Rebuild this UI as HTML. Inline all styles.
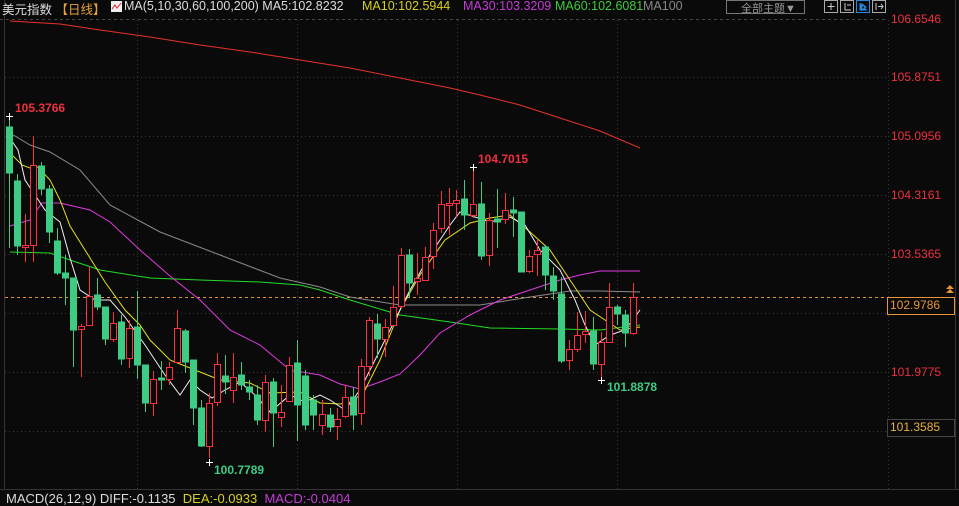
<!DOCTYPE html>
<html><head><meta charset="utf-8"><style>
html,body{margin:0;padding:0;background:#0a0a0a;width:959px;height:504px;overflow:hidden;font-family:"Liberation Sans","Noto Sans CJK SC",sans-serif}
.t{position:absolute;font-size:12px;white-space:nowrap}
.h{font-size:12.5px;top:-1px}
</style></head><body>
<svg width="959" height="504" style="position:absolute;left:0;top:0" xmlns="http://www.w3.org/2000/svg">
<rect width="959" height="504" fill="#0a0a0a"/>
<line x1="0" y1="19.5" x2="886" y2="19.5" stroke="#444" stroke-dasharray="3,3"/>
<g stroke="#3a3a3a" stroke-dasharray="1,3">
<line x1="5" y1="77.5" x2="886" y2="77.5"/><line x1="5" y1="136.5" x2="886" y2="136.5"/><line x1="5" y1="195.5" x2="886" y2="195.5"/><line x1="5" y1="254.5" x2="886" y2="254.5"/><line x1="5" y1="313.5" x2="886" y2="313.5"/><line x1="5" y1="372.5" x2="886" y2="372.5"/><line x1="5" y1="431.5" x2="886" y2="431.5"/>
<line x1="137.5" y1="20" x2="137.5" y2="490"/><line x1="297.5" y1="20" x2="297.5" y2="490"/><line x1="457.5" y1="20" x2="457.5" y2="490"/><line x1="617.5" y1="20" x2="617.5" y2="490"/>
<line x1="888.5" y1="20" x2="888.5" y2="490"/>
</g>
<line x1="4.5" y1="0" x2="4.5" y2="490" stroke="#333"/>
<line x1="0" y1="489.5" x2="959" y2="489.5" stroke="#333"/>
<line x1="955.5" y1="0" x2="955.5" y2="490" stroke="#333"/>
<line x1="5" y1="297.5" x2="886" y2="297.5" stroke="#e8963c" stroke-dasharray="3,3"/>
<g fill="none" stroke-width="1">
<polyline stroke="#e8322c" points="10,21 60,24 100,30 150,37 200,45 250,52 300,60 350,68 400,78 450,88 480,95 520,105 560,118 600,131 640,148"/>
<polyline stroke="#8a8a8a" points="10,133 30,145 50,152 80,170 110,205 160,232 220,255 280,278 320,287 350,297 400,305 480,305 530,297 570,291 600,291 640,292"/>
<polyline stroke="#22dd22" points="10,252 50,253 70,260 100,270 150,278 200,280 260,282 300,285 320,290 350,300 400,315 450,322 490,328 560,329 600,330 640,325"/>
<polyline stroke="#e03ce0" points="10,226 30,220 42,203 60,203 90,210 110,222 140,250 170,276 200,300 230,330 260,345 290,370 320,375 340,384 360,389 380,382 400,374 420,355 440,333 470,315 500,300 530,290 560,280 580,275 600,271 640,271"/>
<polyline stroke="#e6e020" points="9,152 22,165 30,168 38,167 50,180 60,200 70,226 90,258 105,282 125,310 140,325 150,340 170,360 190,368 220,380 250,383 270,393 300,392 320,403 340,404 352,402 365,390 380,360 400,310 420,275 445,240 470,223 490,218 510,215 530,232 550,250 570,280 590,310 605,320 620,330 640,327"/>
<polyline stroke="#f0f0f0" points="9,137 18,150 25,180 35,195 45,210 60,222 70,258 80,290 95,300 110,300 125,317 145,345 165,375 180,395 190,380 200,390 212,398 225,390 240,382 255,395 270,412 290,395 305,402 320,395 330,400 345,410 360,390 375,360 395,320 410,290 430,255 450,225 460,212 475,217 490,222 510,217 525,225 540,250 560,270 575,300 585,325 595,345 610,335 625,330 640,310"/>
</g>
<g stroke-width="1">
<g stroke="#3ecb84" fill="#3ecb84">
<line x1="9.5" y1="116" x2="9.5" y2="248"/><rect x="6.5" y="127" width="6" height="46"/>
<line x1="17.5" y1="174" x2="17.5" y2="255"/><rect x="14.5" y="181" width="6" height="65"/>
<line x1="41.5" y1="162" x2="41.5" y2="195"/><rect x="38.5" y="166" width="6" height="23"/>
<line x1="49.5" y1="185" x2="49.5" y2="243"/><rect x="46.5" y="189" width="6" height="43"/>
<line x1="57.5" y1="228" x2="57.5" y2="275"/><rect x="54.5" y="241" width="6" height="32"/>
<line x1="65.5" y1="255" x2="65.5" y2="305"/><rect x="62.5" y="273" width="6" height="5"/>
<line x1="73.5" y1="278" x2="73.5" y2="367"/><rect x="70.5" y="278" width="6" height="52"/>
<line x1="97.5" y1="278" x2="97.5" y2="310"/><rect x="94.5" y="295" width="6" height="12"/>
<line x1="105.5" y1="307" x2="105.5" y2="345"/><rect x="102.5" y="307" width="6" height="32"/>
<line x1="121.5" y1="315" x2="121.5" y2="365"/><rect x="118.5" y="322" width="6" height="37"/>
<line x1="137.5" y1="291" x2="137.5" y2="379"/><rect x="134.5" y="327" width="6" height="38"/>
<line x1="145.5" y1="365" x2="145.5" y2="412"/><rect x="142.5" y="365" width="6" height="38"/>
<line x1="161.5" y1="361" x2="161.5" y2="390"/><rect x="158.5" y="378" width="6" height="2"/>
<line x1="185.5" y1="329" x2="185.5" y2="373"/><rect x="182.5" y="331" width="6" height="31"/>
<line x1="193.5" y1="360" x2="193.5" y2="425"/><rect x="190.5" y="360" width="6" height="48"/>
<line x1="201.5" y1="400" x2="201.5" y2="447"/><rect x="198.5" y="408" width="6" height="38"/>
<line x1="225.5" y1="355" x2="225.5" y2="394"/><rect x="222.5" y="376" width="6" height="6"/>
<line x1="241.5" y1="362" x2="241.5" y2="390"/><rect x="238.5" y="375" width="6" height="10"/>
<line x1="249.5" y1="380" x2="249.5" y2="400"/><rect x="246.5" y="387" width="6" height="5"/>
<line x1="257.5" y1="385" x2="257.5" y2="425"/><rect x="254.5" y="395" width="6" height="25"/>
<line x1="273.5" y1="378" x2="273.5" y2="447"/><rect x="270.5" y="382" width="6" height="31"/>
<line x1="297.5" y1="340" x2="297.5" y2="441"/><rect x="294.5" y="363" width="6" height="42"/>
<line x1="305.5" y1="370" x2="305.5" y2="430"/><rect x="302.5" y="376" width="6" height="49"/>
<line x1="313.5" y1="395" x2="313.5" y2="430"/><rect x="310.5" y="400" width="6" height="15"/>
<line x1="330.5" y1="408" x2="330.5" y2="432"/><rect x="327.5" y="415" width="6" height="12"/>
<line x1="353.5" y1="387" x2="353.5" y2="430"/><rect x="350.5" y="397" width="6" height="18"/>
<line x1="377.5" y1="314" x2="377.5" y2="358"/><rect x="374.5" y="324" width="6" height="15"/>
<line x1="409.5" y1="249" x2="409.5" y2="298"/><rect x="406.5" y="255" width="6" height="28"/>
<line x1="464.5" y1="180" x2="464.5" y2="230"/><rect x="461.5" y="199" width="6" height="16"/>
<line x1="481.5" y1="182" x2="481.5" y2="260"/><rect x="478.5" y="204" width="6" height="52"/>
<line x1="497.5" y1="189" x2="497.5" y2="248"/><rect x="494.5" y="219" width="6" height="3"/>
<line x1="513.5" y1="197" x2="513.5" y2="237"/><rect x="510.5" y="210" width="6" height="3"/>
<line x1="521.5" y1="212" x2="521.5" y2="272"/><rect x="518.5" y="212" width="6" height="60"/>
<line x1="545.5" y1="245" x2="545.5" y2="290"/><rect x="542.5" y="247" width="6" height="28"/>
<line x1="553.5" y1="267" x2="553.5" y2="300"/><rect x="550.5" y="276" width="6" height="15"/>
<line x1="561.5" y1="277" x2="561.5" y2="363"/><rect x="558.5" y="294" width="6" height="67"/>
<line x1="593.5" y1="317" x2="593.5" y2="370"/><rect x="590.5" y="331" width="6" height="33"/>
<line x1="617.5" y1="305" x2="617.5" y2="325"/><rect x="614.5" y="307" width="6" height="7"/>
<line x1="625.5" y1="310" x2="625.5" y2="347"/><rect x="622.5" y="315" width="6" height="18"/>
</g>
<g stroke="#ff3040" fill="#0a0a0a">
<line x1="25.5" y1="214" x2="25.5" y2="262"/><rect x="22.5" y="245.5" width="6" height="2"/>
<line x1="33.5" y1="136" x2="33.5" y2="262"/><rect x="30.5" y="165.5" width="6" height="80"/>
<line x1="81.5" y1="324" x2="81.5" y2="377"/><rect x="78.5" y="326.5" width="6" height="3"/>
<line x1="89.5" y1="267" x2="89.5" y2="325"/><rect x="86.5" y="296.5" width="6" height="29"/>
<line x1="113.5" y1="312" x2="113.5" y2="342"/><rect x="110.5" y="323.5" width="6" height="16"/>
<line x1="129.5" y1="320" x2="129.5" y2="368"/><rect x="126.5" y="328.5" width="6" height="30"/>
<line x1="153.5" y1="371" x2="153.5" y2="416"/><rect x="150.5" y="379.5" width="6" height="24"/>
<line x1="169.5" y1="362" x2="169.5" y2="385"/><rect x="166.5" y="367.5" width="6" height="12"/>
<line x1="177.5" y1="310" x2="177.5" y2="362"/><rect x="174.5" y="328.5" width="6" height="34"/>
<line x1="209.5" y1="393" x2="209.5" y2="458"/><rect x="206.5" y="403.5" width="6" height="43"/>
<line x1="217.5" y1="353" x2="217.5" y2="406"/><rect x="214.5" y="364.5" width="6" height="38"/>
<line x1="233.5" y1="353" x2="233.5" y2="403"/><rect x="230.5" y="377.5" width="6" height="13"/>
<line x1="265.5" y1="375" x2="265.5" y2="432"/><rect x="262.5" y="382.5" width="6" height="38"/>
<line x1="281.5" y1="385" x2="281.5" y2="427"/><rect x="278.5" y="412.5" width="6" height="5"/>
<line x1="289.5" y1="357" x2="289.5" y2="402"/><rect x="286.5" y="365.5" width="6" height="36"/>
<line x1="322.5" y1="400" x2="322.5" y2="435"/><rect x="319.5" y="414.5" width="6" height="11"/>
<line x1="337.5" y1="408" x2="337.5" y2="440"/><rect x="334.5" y="419.5" width="6" height="7"/>
<line x1="345.5" y1="385" x2="345.5" y2="418"/><rect x="342.5" y="397.5" width="6" height="19"/>
<line x1="361.5" y1="359" x2="361.5" y2="425"/><rect x="358.5" y="366.5" width="6" height="47"/>
<line x1="369.5" y1="317" x2="369.5" y2="376"/><rect x="366.5" y="320.5" width="6" height="46"/>
<line x1="385.5" y1="319" x2="385.5" y2="357"/><rect x="382.5" y="327.5" width="6" height="12"/>
<line x1="393.5" y1="286" x2="393.5" y2="325"/><rect x="390.5" y="307.5" width="6" height="18"/>
<line x1="401.5" y1="248" x2="401.5" y2="308"/><rect x="398.5" y="255.5" width="6" height="51"/>
<line x1="417.5" y1="253" x2="417.5" y2="295"/><rect x="414.5" y="278.5" width="6" height="3"/>
<line x1="425.5" y1="247" x2="425.5" y2="277"/><rect x="422.5" y="257.5" width="6" height="23"/>
<line x1="433.5" y1="223" x2="433.5" y2="269"/><rect x="430.5" y="230.5" width="6" height="26"/>
<line x1="441.5" y1="191" x2="441.5" y2="233"/><rect x="438.5" y="204.5" width="6" height="24"/>
<line x1="449.5" y1="188" x2="449.5" y2="235"/><rect x="446.5" y="203.5" width="6" height="2"/>
<line x1="456.5" y1="190" x2="456.5" y2="218"/><rect x="453.5" y="200.5" width="6" height="3"/>
<line x1="473.5" y1="166" x2="473.5" y2="218"/><rect x="470.5" y="204.5" width="6" height="11"/>
<line x1="489.5" y1="213" x2="489.5" y2="266"/><rect x="486.5" y="220.5" width="6" height="35"/>
<line x1="505.5" y1="193" x2="505.5" y2="224"/><rect x="502.5" y="210.5" width="6" height="9"/>
<line x1="529.5" y1="250" x2="529.5" y2="273"/><rect x="526.5" y="256.5" width="6" height="15"/>
<line x1="537.5" y1="240" x2="537.5" y2="276"/><rect x="534.5" y="250.5" width="6" height="4"/>
<line x1="569.5" y1="340" x2="569.5" y2="370"/><rect x="566.5" y="349.5" width="6" height="11"/>
<line x1="577.5" y1="312" x2="577.5" y2="352"/><rect x="574.5" y="335.5" width="6" height="14"/>
<line x1="585.5" y1="311" x2="585.5" y2="343"/><rect x="582.5" y="331.5" width="6" height="3"/>
<line x1="601.5" y1="332" x2="601.5" y2="380"/><rect x="598.5" y="342.5" width="6" height="22"/>
<line x1="609.5" y1="283" x2="609.5" y2="342"/><rect x="606.5" y="307.5" width="6" height="35"/>
<line x1="633.5" y1="283" x2="633.5" y2="335"/><rect x="630.5" y="297.5" width="6" height="36"/>
</g>
</g>
<g stroke="#fff"><line x1="6" y1="116.5" x2="13" y2="116.5"/><line x1="9.5" y1="113" x2="9.5" y2="120"/>
<line x1="470" y1="167.5" x2="477" y2="167.5"/><line x1="473.5" y1="164" x2="473.5" y2="171"/>
<line x1="206" y1="462.5" x2="213" y2="462.5"/><line x1="209.5" y1="459" x2="209.5" y2="466"/>
<line x1="598" y1="380.5" x2="605" y2="380.5"/><line x1="601.5" y1="377" x2="601.5" y2="384"/></g>
<rect x="887.5" y="297.5" width="67" height="17" fill="#0a0a0a" stroke="#e8963c"/>
<rect x="887.5" y="419.5" width="67" height="17" fill="#0a0a0a" stroke="#444"/>
<path d="M946 289 L950 285 L954 289 Z M946 293 L950 289 L954 293 Z" fill="#e8963c"/>
<rect x="726.5" y="0.5" width="78" height="13" fill="none" stroke="#777"/>
<rect x="824.5" y="0.5" width="13" height="12" fill="none" stroke="#aaa"/>
<rect x="840.5" y="0.5" width="13" height="12" fill="none" stroke="#aaa"/>
<rect x="856.5" y="0.5" width="13" height="12" fill="none" stroke="#2a8adf"/>
<rect x="872.5" y="0.5" width="13" height="12" fill="none" stroke="#aaa"/>
<path d="M831 3v7M827.5 6.5h7" stroke="#ccc"/><path d="M845 3v7h6M847 5h4" stroke="#ccc" fill="none"/>
<path d="M860 3v7h7M862 4l4 3-4 3z" stroke="#2a8adf" fill="#2a8adf"/><path d="M876 3v7M878 6.5h5M881 4l2 2.5-2 2.5" stroke="#ccc" fill="none"/>
<rect x="111" y="1" width="11" height="11" fill="#eee"/><path d="M112 9l3-4 2 3 4-5" stroke="#d22" fill="none"/>
</svg>
<div class="t h" style="left:2px;color:#ddd">美元指数 <span style="color:#e8a23c">【日线】</span></div>
<div class="t h" style="left:124px;color:#ddd">MA(5,10,30,60,100,200) MA5:102.8232</div>
<div class="t h" style="left:362px;color:#d6d020">MA10:102.5944</div>
<div class="t h" style="left:463px;color:#c43cd8">MA30:103.3209</div>
<div class="t h" style="left:555px;color:#3ecb3e">MA60:102.6081</div>
<div class="t h" style="left:643px;color:#888">MA100</div>
<div class="t" style="left:741px;top:0;color:#999;font-size:11px">全部主题▼</div>
<div class="t" style="left:891px;top:12px;color:#ee3040">106.6546</div>
<div class="t" style="left:891px;top:70px;color:#ee3040">105.8751</div>
<div class="t" style="left:891px;top:129px;color:#ee3040">105.0956</div>
<div class="t" style="left:891px;top:188px;color:#ee3040">104.3161</div>
<div class="t" style="left:891px;top:247px;color:#ee3040">103.5365</div>
<div class="t" style="left:890px;top:298px;color:#e8963c">102.9786</div>
<div class="t" style="left:891px;top:365px;color:#ee3040">101.9775</div>
<div class="t" style="left:890px;top:420px;color:#e8b03c">101.3585</div>
<div class="t" style="left:15px;top:101px;color:#ee3040;font-weight:bold">105.3766</div>
<div class="t" style="left:478px;top:152px;color:#ee3040;font-weight:bold">104.7015</div>
<div class="t" style="left:214px;top:463px;color:#3ecb84;font-weight:bold">100.7789</div>
<div class="t" style="left:607px;top:380px;color:#3ecb84;font-weight:bold">101.8878</div>
<div class="t" style="left:6px;top:491px;color:#ddd;font-size:13px">MACD(26,12,9) DIFF:-0.1135 <span style="color:#d6d020">&nbsp;DEA:-0.0933</span> <span style="color:#c43cd8">&nbsp;MACD:-0.0404</span></div>
</body></html>
